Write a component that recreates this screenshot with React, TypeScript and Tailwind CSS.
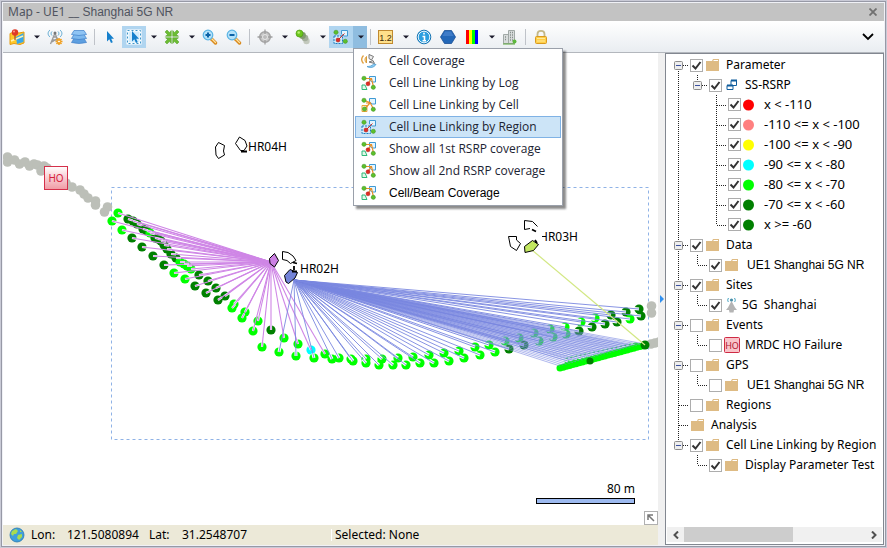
import React, { useState } from "react";

type Pt = [number, number];

const LIME = "#00ff00";
const DARK = "#008000";
const CYAN = "#00ffff";
const GRAY = "#bcbfb8";
const PINK = "#cf86e6";
const BLUE = "#7a88e0";
const PINK_ORIGIN: Pt = [271, 262];
const BLUE_ORIGIN: Pt = [294, 280];

/* ---------- map data ---------- */

const idlePoints: Pt[] = [
  [7.5, 157], [7.5, 162], [14.5, 160], [19.5, 164], [25, 162], [29.5, 166], [34, 164], [37.5, 165],
  [41, 171], [44, 166], [47, 168], [66, 183], [72, 187], [80, 190], [84, 194], [88, 198], [95.5, 201],
  [95.5, 205], [107.5, 207], [104.5, 212], [651.5, 306], [651.5, 313], [651, 344], [655, 343], [659, 342],
];

const pinkPoints: [number, number, string][] = [
  [112, 221, LIME], [122, 230, LIME], [132, 238, DARK], [142, 247, DARK], [153, 256, DARK], [164, 265, DARK],
  [174, 273, LIME], [185, 279, LIME], [195, 286, DARK], [206, 293, DARK], [218, 300, DARK], [232, 308, LIME],
  [242, 318, LIME], [253, 331, LIME], [262, 347, LIME],
  [118, 213, LIME], [128, 219, DARK], [133, 221, DARK], [137, 224, DARK], [143, 229, DARK], [147, 231, DARK],
  [150, 233, LIME], [155, 238, DARK], [158, 239, DARK], [161, 241, DARK], [164, 245, DARK], [167, 249, DARK],
  [171, 254, DARK], [176, 258, DARK], [180, 262, LIME], [184, 264, LIME], [187, 266, LIME], [191, 269, LIME],
  [199, 275, DARK], [208, 281, DARK], [216, 288, DARK], [225, 296, DARK], [234, 304, LIME], [245, 312, LIME],
  [258, 321, LIME], [271, 330, DARK], [284, 338, LIME], [298, 344, LIME], [311, 350, CYAN], [325, 354, LIME],
];

const bluePoints: [number, number, string][] = [
  [279, 352, LIME], [296, 356, LIME], [314, 358, LIME], [332, 359, LIME], [339, 358, LIME], [351, 359, LIME],
  [353, 361, LIME], [366, 359, LIME], [366, 363, LIME], [379, 365, LIME], [382, 359, LIME], [393, 365, LIME],
  [398, 358, LIME], [406, 365, LIME], [413, 357, LIME], [420, 363, LIME], [429, 355, LIME], [434, 363, LIME],
  [444, 353, LIME], [449, 361, LIME], [459, 351, LIME], [464, 358, LIME], [475, 347, LIME], [480, 355, LIME],
  [489, 345, LIME], [495, 352, LIME], [505, 341, LIME], [509, 349, DARK], [519, 338, LIME], [524, 345, DARK],
  [534, 333, LIME], [539, 341, LIME], [550, 329, LIME], [553, 337, LIME], [565, 327, LIME], [566, 334, LIME],
  [581, 322, LIME], [595, 318, LIME],
  [579, 331, DARK], [592, 327, DARK], [605, 324, DARK], [611, 315, DARK], [617, 322, DARK], [626, 312, DARK],
  [630, 319, LIME], [639, 309, DARK], [641, 316, DARK],
];

const tailPoints: Pt[] = Array.from({ length: 27 }, (_, i) => [560 + i * 3.2, 368 - i * 0.86] as Pt);
const upperTail: Pt[] = Array.from({ length: 16 }, (_, i) => [568 + i * 4.5, 361 - i * 1] as Pt);

function Link({ from, to, color, width, halo = 3 }: { from: Pt; to: Pt; color: string; width: number; halo?: number }) {
  const dx = from[0] - to[0];
  const dy = from[1] - to[1];
  const d = Math.hypot(dx, dy);
  return (
    <g>
      <line x1={to[0]} y1={to[1]} x2={to[0] + (dx / d) * 5} y2={to[1] + (dy / d) * 5} stroke="#fff" strokeWidth={halo} />
      <line x1={from[0]} y1={from[1]} x2={to[0]} y2={to[1]} stroke={color} strokeWidth={width} />
    </g>
  );
}

function MapCanvas() {
  return (
    <svg
      className="block h-full w-full font-['Noto_Sans',sans-serif] text-xs"
      viewBox="3 53 655 472"
      preserveAspectRatio="xMinYMin slice"
      role="img"
      aria-label="Map"
    >
      <rect x="111.5" y="187.5" width="537" height="252" fill="none" stroke="#8fb2e6" strokeDasharray="3 3" />
      {idlePoints.map(([x, y], i) => (
        <circle key={i} cx={x} cy={y} r="4.8" fill={GRAY} />
      ))}
      {pinkPoints.map(([x, y, c], i) => (
        <circle key={i} cx={x} cy={y} r="4.6" fill={c} />
      ))}
      {bluePoints.map(([x, y, c], i) => (
        <circle key={i} cx={x} cy={y} r="4.6" fill={c} />
      ))}
      {upperTail.map(([x, y], i) => (
        <circle key={i} cx={x} cy={y} r="3.5" fill={LIME} />
      ))}
      {pinkPoints.map(([x, y], i) => (
        <Link key={i} from={PINK_ORIGIN} to={[x, y]} color={PINK} width={1.1} halo={2.2} />
      ))}
      {bluePoints.map(([x, y, c], i) => (
        <Link
          key={i}
          from={BLUE_ORIGIN}
          to={[x, y]}
          color={BLUE}
          width={0.9}
          halo={x > 500 && x < 600 && c === LIME ? 6 : 3}
        />
      ))}
      {upperTail.map(([x, y], i) => (
        <Link key={i} from={BLUE_ORIGIN} to={[x, y]} color={BLUE} width={0.7} />
      ))}
      {tailPoints.map(([x, y], i) => (
        <circle key={i} cx={x} cy={y} r="3.5" fill={LIME} />
      ))}
      {tailPoints.map(([x, y], i) => (
        <line key={i} x1={BLUE_ORIGIN[0]} y1={BLUE_ORIGIN[1]} x2={x} y2={y - 2} stroke={BLUE} strokeWidth="0.6" />
      ))}
      <circle cx="590" cy="361" r="3.5" fill={DARK} />
      <circle cx="645" cy="345" r="4.5" fill={DARK} />
      <path d="M532 250L645 345" stroke="#d3e884" strokeWidth="1.2" />

      <g fill="#fff" stroke="#000" strokeWidth="1">
        <path d="M218.500 142.500L224.500 145.500L223.500 151L224.500 155L218.500 158.500L216 155L215.500 147Z" />
        <path d="M239.500 137L245 140.500L247 146L244 150.500H240.500L235.500 143.500Z" />
        <path d="M282.500 251.500L288 252.500L293 256L296 260.500L290.500 263.500L287 260.500L282.500 259.500Z" />
        <path d="M524.500 220.500L532.500 221.500L537.500 226.500M530 228.500L524.500 229.500V220.500" />
        <path d="M508.500 236.500L516.500 236.500L516.500 240L520.500 243.500L516.500 250.500L510.500 246.500Z" />
        <path d="M274.500 253.500L278.500 260.500L274.500 267L270 263.500L269.500 258.500Z" fill="#cc80e4" />
        <path d="M284.500 275.500L290 269.500L297.500 272.500L295 278L288.500 283.500L286 282Z" fill="#7383d8" />
        <path d="M524.500 246.500L532.500 240.500L538.500 244.500L533.500 250.500L525 252.500Z" fill="#c3e860" />
        <path d="M241 151.500H247M293 262.500L297 263.500M294 266V270M292 271.500H297M532 229.500L536 231.500M535 240L537 243" strokeWidth="1.800" />
      </g>
      <text x="248" y="151" fontSize="12">HR04H</text>
      <text x="300" y="273" fontSize="12">HR02H</text>
      <text x="539" y="241" fontSize="12">HR03H</text>
      <rect x="539" y="231" width="3" height="11" fill="#fff" />
      <g>
        <defs>
          <linearGradient id="hoFill" x1="0" y1="0" x2="0" y2="1">
            <stop offset="0" stopColor="#fff" />
            <stop offset="1" stopColor="#f09aa4" />
          </linearGradient>
        </defs>
        <rect x="44.500" y="166.500" width="23" height="23" fill="url(#hoFill)" stroke="#d5304a" />
        <text x="56" y="182" textAnchor="middle" fontSize="10" fill="#d5203c">HO</text>
      </g>
      <text x="635" y="493" textAnchor="end" fontSize="12">80 m</text>
      <rect x="536.500" y="498.500" width="98" height="5" fill="#9dbaf0" stroke="#000" />
    </svg>
  );
}

/* ---------- icons ---------- */

type IconProps = { children: React.ReactNode; className?: string };
function Svg({ children, className = "h-4 w-4" }: IconProps) {
  return (
    <svg className={`${className} shrink-0`} viewBox="0 0 16 16" fill="none" aria-hidden="true">
      {children}
    </svg>
  );
}

const MapPinIcon = () => (
  <Svg>
    <path d="M1 4.500L5 3L10 4L15 3V14L11 15.500L5 14.500L1 15.500Z" fill="#ffc928" stroke="#e59a10" />
    <path d="M7 8L14.500 4V13L8 15Z" fill="#38a8ea" />
    <path d="M2 12L14 7" stroke="#fff3b0" strokeWidth="1.500" />
    <path d="M6 5V11" stroke="#8b2a20" />
    <circle cx="6" cy="3.500" r="3.200" fill="#e03a28" />
    <circle cx="5" cy="2.500" r="1" fill="#ff9a8a" />
  </Svg>
);
const AntennaIcon = () => (
  <Svg>
    <path d="M3 1C.5 3 .5 6 3 8M13 1C15.500 3 15.500 6 13 8M5 2.500C3.800 3.500 3.800 5.500 5 6.500M11 2.500C12.200 3.500 12.200 5.500 11 6.500" stroke="#5aa7d0" />
    <path d="M8 4L3.500 15M8 4L12 15M6.500 8H9.500M5.500 11H11M5 13L11 9" stroke="#9a9a9a" strokeWidth="1.300" />
    <circle cx="8" cy="4" r="1.500" fill="#777" />
    <path d="M12 9V16M8.500 12.500H15.500M9.500 10L14.500 15M14.500 10L9.500 15" stroke="#f0a020" strokeWidth="1.600" />
    <circle cx="12" cy="12.500" r="1.400" fill="#fff" stroke="#f0a020" />
  </Svg>
);
const LayersIcon = () => (
  <Svg>
    <path d="M3 9.500H13L15.500 13.500Q8 15.500 .5 13.500Z" fill="#5d9fe0" stroke="#3f7fc8" strokeWidth=".7" />
    <path d="M3 5.500H13L15.500 9.500Q8 11.500 .5 9.500Z" fill="#7db8ee" stroke="#3f7fc8" strokeWidth=".7" />
    <path d="M3 1.500H13L15.500 5.500Q8 7.500 .5 5.500Z" fill="#8fc4f4" stroke="#3f7fc8" strokeWidth=".7" />
  </Svg>
);
const CursorShape = ({ x = 0 }: { x?: number }) => (
  <path transform={`translate(${x} 0)`} d="M5 2V12.500L7.300 10.300L9 14L10.800 13.200L9.200 9.700H12Z" fill="#1680cc" />
);
const CursorIcon = () => (
  <Svg>
    <CursorShape />
  </Svg>
);
const SelectIcon = () => (
  <Svg>
    <rect x="1.500" y="1.500" width="13" height="13" fill="#d3edfc" stroke="#fff" strokeWidth="2" />
    <rect x="1.500" y="1.500" width="13" height="13" stroke="#3f96c8" strokeDasharray="2 2" />
    <CursorShape x={1} />
  </Svg>
);
const ShrinkIcon = () => (
  <Svg>
    <path
      d="M7.300 1.500V7.300H1.500L3.400 5.400L1 3L3 1L5.400 3.400ZM8.700 1.500V7.300H14.500L12.600 5.400L15 3L13 1L10.600 3.400ZM7.300 14.500V8.700H1.500L3.400 10.600L1 13L3 15L5.400 12.600ZM8.700 14.500V8.700H14.500L12.600 10.600L15 13L13 15L10.600 12.600Z"
      fill="#6cbc34"
      stroke="#4f9f22"
      strokeWidth=".5"
    />
  </Svg>
);
const ZoomIcon = ({ plus }: { plus?: boolean }) => (
  <Svg>
    <path d="M9.500 10L13.500 14" stroke="#d98a1e" strokeWidth="3.400" strokeLinecap="round" />
    <path d="M10 10L13.500 13.500" stroke="#ffe3a0" strokeWidth="1.300" strokeLinecap="round" />
    <circle cx="6" cy="6" r="4.800" fill="#b4e2fa" stroke="#5ab4e4" strokeWidth="1.200" />
    <path d={plus ? "M3.500 6H8.500M6 3.500V8.500" : "M3.500 6H8.500"} stroke="#0c63a8" strokeWidth="2" />
  </Svg>
);
const TargetIcon = () => (
  <Svg>
    <circle cx="8" cy="8" r="5.300" fill="#c8c8c8" stroke="#a4a4a4" strokeWidth="1.500" />
    <path d="M8 .5V15.500M.5 8H15.500" stroke="#a0a0a0" strokeWidth="1.300" />
    <circle cx="8" cy="8" r="2.500" fill="#bbb" stroke="#e8e8e8" />
  </Svg>
);
const TrailIcon = () => (
  <Svg>
    <circle cx="11.500" cy="12" r="3.200" fill="#c3c9bd" />
    <circle cx="10" cy="9" r="3.300" fill="#a3ad9b" />
    <circle cx="7.500" cy="6.500" r="3.400" fill="#7f9a6c" />
    <circle cx="4.500" cy="4.500" r="3.500" fill="#6cc61e" stroke="#4c9c10" strokeWidth=".7" />
    <circle cx="3.700" cy="3.500" r="1.300" fill="#b8f070" />
  </Svg>
);
type LinkKind = "log" | "cell" | "region";
const GreenNode = ({ x, y }: { x: number; y: number }) => (
  <circle cx={x} cy={y} r="2.100" fill="#5cc02c" stroke="#3f8f20" strokeWidth=".5" />
);
const LinkIcon = ({ kind }: { kind: LinkKind }) => (
  <Svg>
    <path d="M8.500 1.500H14.500V7H11L8.500 5Z" fill="#e4f5fe" stroke="#3f9ad4" />
    {kind === "region" && (
      <rect x="1" y="7" width="8.500" height="7.500" fill="#cfeafa" stroke="#1b7fc0" strokeDasharray="2 1" />
    )}
    {kind === "region" && <path d="M5 11L11.500 4.500" stroke="#d4302a" />}
    {kind === "log" && (
      <>
        <path d="M1 10H4L6 14.500H1Z" fill="#e0f7e8" stroke="#2fb878" />
        <path d="M3 3.500H10.500L12.500 12M10 4L7 8.500" stroke="#e8902a" strokeWidth="1.200" />
      </>
    )}
    {kind === "cell" && (
      <>
        <path d="M1 8.500H6V14.500H1Z" fill="#fff4d8" stroke="#e8a83a" />
        <path d="M3 3.500L9 5.500L12.500 12M3.500 12L9 6H5" stroke="#e8902a" strokeWidth="1.200" />
      </>
    )}
    <GreenNode x={3} y={3.3} />
    <GreenNode x={12.3} y={12.3} />
    {kind === "cell" ? (
      <GreenNode x={3.5} y={12} />
    ) : (
      <circle cx={kind === "region" ? 5 : 7} cy={kind === "region" ? 11 : 8.8} r="2" fill="#e02c24" stroke="#a81810" strokeWidth=".5" />
    )}
  </Svg>
);
const CoverageIcon = () => (
  <Svg>
    <path d="M2.500 2.500C.2 5 .2 8 2.500 10.500" stroke="#e0a040" strokeWidth="1.300" />
    <path d="M5.500 3.500C3.500 5.500 3.500 8 5.500 10Z" fill="#ffe8a8" stroke="#d89a38" />
    <path d="M8 1.500L12.500 3.500L10.500 7L8 5.500Z" fill="#eee" stroke="#777" />
    <path d="M8 9L12 7.500L13.500 10.500Z" fill="#e4e4e4" stroke="#777" />
    <path d="M6 13.500C9 15.500 13 14.500 15 11.500L12.500 11C11 13 8.500 13.500 6 13.500Z" fill="#8fcdf2" stroke="#4a9ad0" strokeWidth=".8" />
  </Svg>
);
const LabelIcon = () => (
  <Svg>
    <rect x=".5" y="1.500" width="14" height="13" fill="#ffe08a" stroke="#c08a30" />
    <text x="7.500" y="11.500" textAnchor="middle" fontSize="9" fill="#402c08" fontFamily="Liberation Sans">1.2</text>
  </Svg>
);
const InfoIcon = () => (
  <Svg>
    <circle cx="8" cy="8" r="6.800" fill="#2a9fe0" stroke="#1070b0" />
    <circle cx="8" cy="8" r="5.800" stroke="#fff" strokeWidth=".9" />
    <path d="M8 3.800V5.500M6.500 7.500H8.500V11.500M6.500 11.800H10" stroke="#fff" strokeWidth="1.600" />
  </Svg>
);
const HexIcon = () => (
  <Svg>
    <path d="M4.500 1.500H11.500L15.500 8L11.500 14.500H4.500L.5 8Z" fill="#2468b8" stroke="#1a4f94" strokeWidth=".8" />
    <path d="M5 2.500H11L13.500 7H2.500Z" fill="#3f7cc8" />
  </Svg>
);
const BarsIcon = () => (
  <Svg>
    <path d="M2 1H5V15H2Z" fill="#f00" />
    <path d="M5 1H8V15H5Z" fill="#ff0" />
    <path d="M8 1H11V15H8Z" fill="#0f0" />
    <path d="M11 1H14V15H11Z" fill="#00f" />
  </Svg>
);
const BuildingIcon = () => (
  <Svg>
    <path d="M6.500 1.500H12.500V14.500H6.500ZM1.500 5.500H6.500V14.500H1.500Z" fill="#d8dcdc" stroke="#a0a8a6" />
    <path d="M8 3.500H11M8 6H11M8 8.500H11M8 11H11M3 8H5M3 10.500H5" stroke="#868e8c" strokeDasharray="1 1" strokeWidth="1.300" />
    <path d="M1 15H13" stroke="#5ca83c" strokeWidth="1" />
    <circle cx="12.500" cy="12.500" r="2" fill="#5cb83c" />
  </Svg>
);
const LockIcon = () => (
  <Svg>
    <path d="M4.500 8V5C4.500 .8 11.500 .8 11.500 5V8" stroke="#c4b888" strokeWidth="1.800" />
    <rect x="2.500" y="7.500" width="11" height="7" rx="1" fill="#ffcf48" stroke="#d89a20" />
    <path d="M4 9.500H12M4 12H12" stroke="#ffe99a" />
  </Svg>
);
const FolderIcon = () => (
  <Svg>
    <path d="M1 4H7L8 2H14V14H1Z" fill="#debb84" />
    <path d="M8.500 3.500H13" stroke="#fff" />
  </Svg>
);
const ParamIcon = () => (
  <Svg>
    <path d="M7 3.500H12.500V8.500H7ZM3 8.500H9V12.500H3Z" fill="#fff" stroke="#0f5c9c" />
    <path d="M7 3.500H13M3 8.500H9" stroke="#0f5c9c" strokeWidth="2" />
  </Svg>
);
const SiteIcon = () => (
  <Svg>
    <path d="M7.500 4L11 10.500L13 13H10L9.500 15.500H5.500L5 13H2L4 10.500Z" fill="#b4b4b4" />
    <path d="M4.500 1C3.500 2.500 3.500 4 4.500 5M10.500 1C11.500 2.500 11.500 4 10.500 5" stroke="#3f9fc0" />
    <circle cx="7.500" cy="3" r="1.600" fill="#4a8fa8" />
  </Svg>
);
const HoIcon = () => (
  <svg className="h-4 w-4 shrink-0" viewBox="0 0 16 16" aria-hidden="true">
    <rect x=".5" y=".5" width="15" height="15" rx="1" fill="#f9c4ca" stroke="#cf2a44" />
    <text x="8" y="11.500" textAnchor="middle" fontSize="9" fill="#b01530" fontFamily="Noto Sans">HO</text>
  </svg>
);
const Dot = ({ color }: { color: string }) => (
  <Svg>
    <circle cx="5.500" cy="8" r="5.500" fill={color} />
  </Svg>
);

/* ---------- toolbar ---------- */

function Tool({ label, active, children }: { label: string; active?: boolean; children: React.ReactNode }) {
  return (
    <button
      type="button"
      aria-label={label}
      className={`flex h-[22px] w-6 shrink-0 items-center justify-center ${active ? "bg-[#b0d5f0]" : ""}`}
    >
      {children}
    </button>
  );
}
function Drop({ label, active, onClick }: { label: string; active?: boolean; onClick?: () => void }) {
  return (
    <button
      type="button"
      aria-label={label}
      onClick={onClick}
      className={`flex h-[22px] w-3.5 shrink-0 items-center justify-center pl-px ${active ? "bg-[#8fbde0]" : ""}`}
    >
      <svg className="h-1 w-2" viewBox="0 0 8 4" aria-hidden="true">
        <path d="M1 0.500H7L4 3.500Z" fill="#1a1a2a" />
      </svg>
    </button>
  );
}
const Sep = () => <span className="mx-[3px] h-4 w-px shrink-0 bg-[#bfc3c9]" />;

const menuItems: { label: string; icon: React.ReactNode; arial?: boolean; on?: boolean }[] = [
  { label: "Cell Coverage", icon: <CoverageIcon /> },
  { label: "Cell Line Linking by Log", icon: <LinkIcon kind="log" /> },
  { label: "Cell Line Linking by Cell", icon: <LinkIcon kind="cell" /> },
  { label: "Cell Line Linking by Region", icon: <LinkIcon kind="region" />, on: true },
  { label: "Show all 1st RSRP coverage", icon: <LinkIcon kind="log" /> },
  { label: "Show all 2nd RSRP coverage", icon: <LinkIcon kind="log" /> },
  { label: "Cell/Beam Coverage", icon: <LinkIcon kind="log" />, arial: true },
];

function Menu() {
  return (
    <div
      role="menu"
      className="absolute left-6 top-[22px] z-10 w-[210px] border border-[#9aa0aa] bg-white p-px shadow-[3px_3px_2px_rgba(0,0,0,0.45)]"
    >
      {menuItems.map((m) => (
        <button
          key={m.label}
          type="button"
          role="menuitem"
          className={`flex h-[22px] w-full items-center gap-3 border pl-[5px] text-left text-xs ${
            m.on ? "border-[#7fb2e5] bg-[#cce4f7]" : "border-transparent"
          } ${
            m.arial
              ? "font-['Liberation_Sans',sans-serif] text-black"
              : "font-['Open_Sans',sans-serif] text-[#1c2433]"
          }`}
        >
          {m.icon}
          <span className="whitespace-nowrap">{m.label}</span>
        </button>
      ))}
    </div>
  );
}

function Toolbar() {
  const [open, setOpen] = useState(true);
  return (
    <div className="flex h-8 shrink-0 items-center border-b border-[#b3b7bd] bg-linear-to-b from-white to-[#e9edf1] pl-0.5">
      <Tool label="Map"><MapPinIcon /></Tool>
      <Drop label="Map options" />
      <Tool label="Site settings"><AntennaIcon /></Tool>
      <Tool label="Layers"><LayersIcon /></Tool>
      <Sep />
      <Tool label="Pointer"><CursorIcon /></Tool>
      <Tool label="Select area" active><SelectIcon /></Tool>
      <Drop label="Select options" />
      <Tool label="Fit"><ShrinkIcon /></Tool>
      <Drop label="Fit options" />
      <Tool label="Zoom in"><ZoomIcon plus /></Tool>
      <Tool label="Zoom out"><ZoomIcon /></Tool>
      <Sep />
      <Tool label="Center"><TargetIcon /></Tool>
      <Drop label="Center options" />
      <Tool label="Trail"><TrailIcon /></Tool>
      <Drop label="Trail options" />
      <div className="relative flex">
        <Tool label="Cell line linking" active><LinkIcon kind="region" /></Tool>
        <Drop label="Cell line linking options" active onClick={() => setOpen(!open)} />
        {open && <Menu />}
      </div>
      <Sep />
      <Tool label="Values"><LabelIcon /></Tool>
      <Drop label="Value options" />
      <Tool label="Info"><InfoIcon /></Tool>
      <Tool label="Region"><HexIcon /></Tool>
      <Tool label="Colors"><BarsIcon /></Tool>
      <Drop label="Color options" />
      <Tool label="Buildings"><BuildingIcon /></Tool>
      <Sep />
      <Tool label="Lock"><LockIcon /></Tool>
      <button type="button" aria-label="More" className="ml-auto mr-2.5 flex h-5 w-3 items-center">
        <svg className="h-2 w-3" viewBox="0 0 12 8" fill="none" aria-hidden="true">
          <path d="M1 1L6 6L11 1" stroke="#000" strokeWidth="1.800" />
        </svg>
      </button>
    </div>
  );
}

/* ---------- tree ---------- */

type Guide = "box" | "boxFirst" | "boxLast" | "line" | "tee" | "elbow" | "none" | "open";

function GuideCell({ kind }: { kind: Guide }) {
  const box = kind === "box" || kind === "boxFirst" || kind === "boxLast" || kind === "open";
  const up = kind !== "none" && kind !== "boxFirst";
  const down = kind === "box" || kind === "boxFirst" || kind === "line" || kind === "tee";
  const right = box || kind === "tee" || kind === "elbow";
  return (
    <svg className="h-5 w-[19px] shrink-0" viewBox="0 0 19 20" fill="none" aria-hidden="true">
      <g stroke="#222" strokeDasharray="1 1">
        {up && <path d="M7.500 0V10" />}
        {down && <path d="M7.500 10V20" />}
        {right && <path d="M8 10.500H18" />}
      </g>
      {box && (
        <g>
          <rect x="3.500" y="6.500" width="8" height="8" rx="1" fill="#eee" stroke="#8c8c8c" />
          <path d="M5 10.500H10" stroke="#3a50a0" />
        </g>
      )}
    </svg>
  );
}

type Row = {
  label: string;
  guides: Guide[];
  checked?: boolean;
  icon: React.ReactNode;
  style?: "arial" | "range" | "tight";
};

const textStyles = {
  plain: "ml-[5px] text-xs",
  range: "ml-[5px] text-[13px]",
  tight: "ml-0.5 text-xs",
  arial: "ml-[7px] font-['Liberation_Sans',sans-serif] text-xs",
};

const f = <FolderIcon />;
const rows: Row[] = [
  { label: "Parameter", guides: ["boxFirst"], checked: true, icon: f },
  { label: "SS-RSRP", guides: ["line", "open"], checked: true, icon: <ParamIcon /> },
  { label: "x < -110", guides: ["line", "none", "tee"], checked: true, icon: <Dot color="#ff0000" />, style: "range" },
  { label: "-110 <= x < -100", guides: ["line", "none", "tee"], checked: true, icon: <Dot color="#ff8080" />, style: "range" },
  { label: "-100 <= x < -90", guides: ["line", "none", "tee"], checked: true, icon: <Dot color="#ffff00" />, style: "range" },
  { label: "-90 <= x < -80", guides: ["line", "none", "tee"], checked: true, icon: <Dot color="#00ffff" />, style: "range" },
  { label: "-80 <= x < -70", guides: ["line", "none", "tee"], checked: true, icon: <Dot color="#00ff00" />, style: "range" },
  { label: "-70 <= x < -60", guides: ["line", "none", "tee"], checked: true, icon: <Dot color="#008000" />, style: "range" },
  { label: "x >= -60", guides: ["line", "none", "elbow"], checked: true, icon: <Dot color="#008000" />, style: "range" },
  { label: "Data", guides: ["box"], checked: true, icon: f },
  { label: "UE1 Shanghai 5G NR", guides: ["line", "elbow"], checked: true, icon: f, style: "arial" },
  { label: "Sites", guides: ["box"], checked: true, icon: f },
  { label: "5G  Shanghai", guides: ["line", "elbow"], checked: true, icon: <SiteIcon />, style: "tight" },
  { label: "Events", guides: ["box"], checked: false, icon: f },
  { label: "MRDC HO Failure", guides: ["line", "elbow"], checked: false, icon: <HoIcon /> },
  { label: "GPS", guides: ["box"], checked: false, icon: f },
  { label: "UE1 Shanghai 5G NR", guides: ["line", "elbow"], checked: false, icon: f, style: "arial" },
  { label: "Regions", guides: ["tee"], checked: false, icon: f },
  { label: "Analysis", guides: ["tee"], icon: f },
  { label: "Cell Line Linking by Region", guides: ["boxLast"], checked: true, icon: f },
  { label: "Display Parameter Test", guides: ["none", "elbow"], checked: true, icon: f },
];

function TreeRow({ row }: { row: Row }) {
  const body = (
    <>
      {row.icon}
      <span className={`whitespace-pre text-black ${textStyles[row.style ?? "plain"]}`}>{row.label}</span>
    </>
  );
  return (
    <li className="flex h-5 items-center">
      {row.guides.map((g, i) => (
        <GuideCell key={i} kind={g} />
      ))}
      {row.checked === undefined ? (
        <span className="flex items-center">{body}</span>
      ) : (
        <label className="flex items-center">
          <span className="mr-0.5 grid h-[13px] w-[13px] shrink-0">
            <input
              type="checkbox"
              defaultChecked={row.checked}
              className="peer col-start-1 row-start-1 h-[13px] w-[13px] appearance-none border border-[#adadad] bg-white"
            />
            <svg
              className="pointer-events-none invisible col-start-1 row-start-1 h-[13px] w-[13px] peer-checked:visible"
              viewBox="0 0 13 13"
              fill="none"
              aria-hidden="true"
            >
              <path d="M2.500 6.500L5.500 9.500L10.500 3" stroke="#333" strokeWidth="2" />
            </svg>
          </span>
          {body}
        </label>
      )}
    </li>
  );
}

function TreePanel() {
  return (
    <aside className="flex w-[219px] shrink-0 flex-col border border-[#828790] bg-white">
      <ul className="min-h-0 flex-1 overflow-hidden pl-[5px] pt-px">
        {rows.map((r, i) => (
          <TreeRow key={i} row={r} />
        ))}
      </ul>
      <div className="mx-px mb-0.5 flex h-[15px] shrink-0 items-center bg-[#f0f0f0]">
        <button type="button" aria-label="Scroll left" className="flex w-[17px] justify-center">
          <svg className="h-2 w-2" viewBox="0 0 8 8" fill="none" aria-hidden="true">
            <path d="M6 .5L2.500 4L6 7.500" stroke="#505050" strokeWidth="2" />
          </svg>
        </button>
        <div className="h-full flex-1">
          <div className="h-full w-3/5 bg-[#cdcdcd]" />
        </div>
        <button type="button" aria-label="Scroll right" className="flex w-[17px] justify-center">
          <svg className="h-2 w-2" viewBox="0 0 8 8" fill="none" aria-hidden="true">
            <path d="M2 .5L5.500 4L2 7.500" stroke="#505050" strokeWidth="2" />
          </svg>
        </button>
      </div>
    </aside>
  );
}

/* ---------- window ---------- */

export default function App() {
  return (
    <div className="h-screen bg-[#c9cad6] p-px font-['Noto_Sans',sans-serif] text-xs">
      <div className="flex h-full flex-col border border-[#9799a6] bg-[#f0f1f6] p-px">
        <header className="flex h-[18px] shrink-0 items-center bg-[#c3c3c3] pl-[5px] pr-[7px] text-[#50545f]">
          <h1 className="flex items-center whitespace-pre">
            <span>Map - UE1 __</span>
            <span className="font-['Liberation_Sans',sans-serif]"> Shanghai 5G NR</span>
          </h1>
          <button type="button" aria-label="Close" className="ml-auto">
            <svg className="h-2 w-2" viewBox="0 0 8 8" fill="none" aria-hidden="true">
              <path d="M.5 .5L7.500 7.500M7.500 .5L.5 7.500" stroke="#707070" strokeWidth="1.800" />
            </svg>
          </button>
        </header>
        <Toolbar />
        <div className="flex min-h-0 flex-1">
          <div className="flex min-w-0 flex-1 flex-col">
            <main className="relative min-h-0 flex-1 overflow-hidden bg-white">
              <MapCanvas />
              <button
                type="button"
                aria-label="Show overview"
                className="absolute bottom-0 right-0 flex h-3.5 w-3.5 items-center justify-center border border-[#b0b0b0] bg-white"
              >
                <svg className="h-2 w-2" viewBox="0 0 8 8" fill="none" aria-hidden="true">
                  <path d="M1 6V1H6M1.500 1.500L7 7" stroke="#777" strokeWidth="1.500" />
                </svg>
              </button>
            </main>
            <footer className="flex h-5 shrink-0 items-center bg-[#ece9d8] pl-1.5 text-black">
              <svg className="h-4 w-4" viewBox="0 0 16 16" aria-hidden="true">
                <circle cx="8" cy="8" r="7" fill="#3f9fdc" stroke="#2878b0" strokeWidth=".8" />
                <path d="M3 4L7 2L9 4L7 7L5 7L4 9L2 7ZM9 8L13 7L13 10L10 13L8 11ZM11 3L13 5L11 5Z" fill="#a8dc50" />
              </svg>
              <span className="ml-1.5 w-9">Lon:</span>
              <span className="w-[82px]">121.5080894</span>
              <span className="w-[33px]">Lat:</span>
              <span className="w-[149px]">31.2548707</span>
              <span className="border-l border-white pl-[3px] leading-3">Selected: None</span>
            </footer>
          </div>
          <div className="flex w-[7px] shrink-0 items-center bg-[#f0f0f0]">
            <svg className="ml-0.5 h-2 w-1" viewBox="0 0 4 8" aria-hidden="true">
              <path d="M0 0V8L4 4Z" fill="#2f8ff0" />
            </svg>
          </div>
          <TreePanel />
        </div>
      </div>
    </div>
  );
}
